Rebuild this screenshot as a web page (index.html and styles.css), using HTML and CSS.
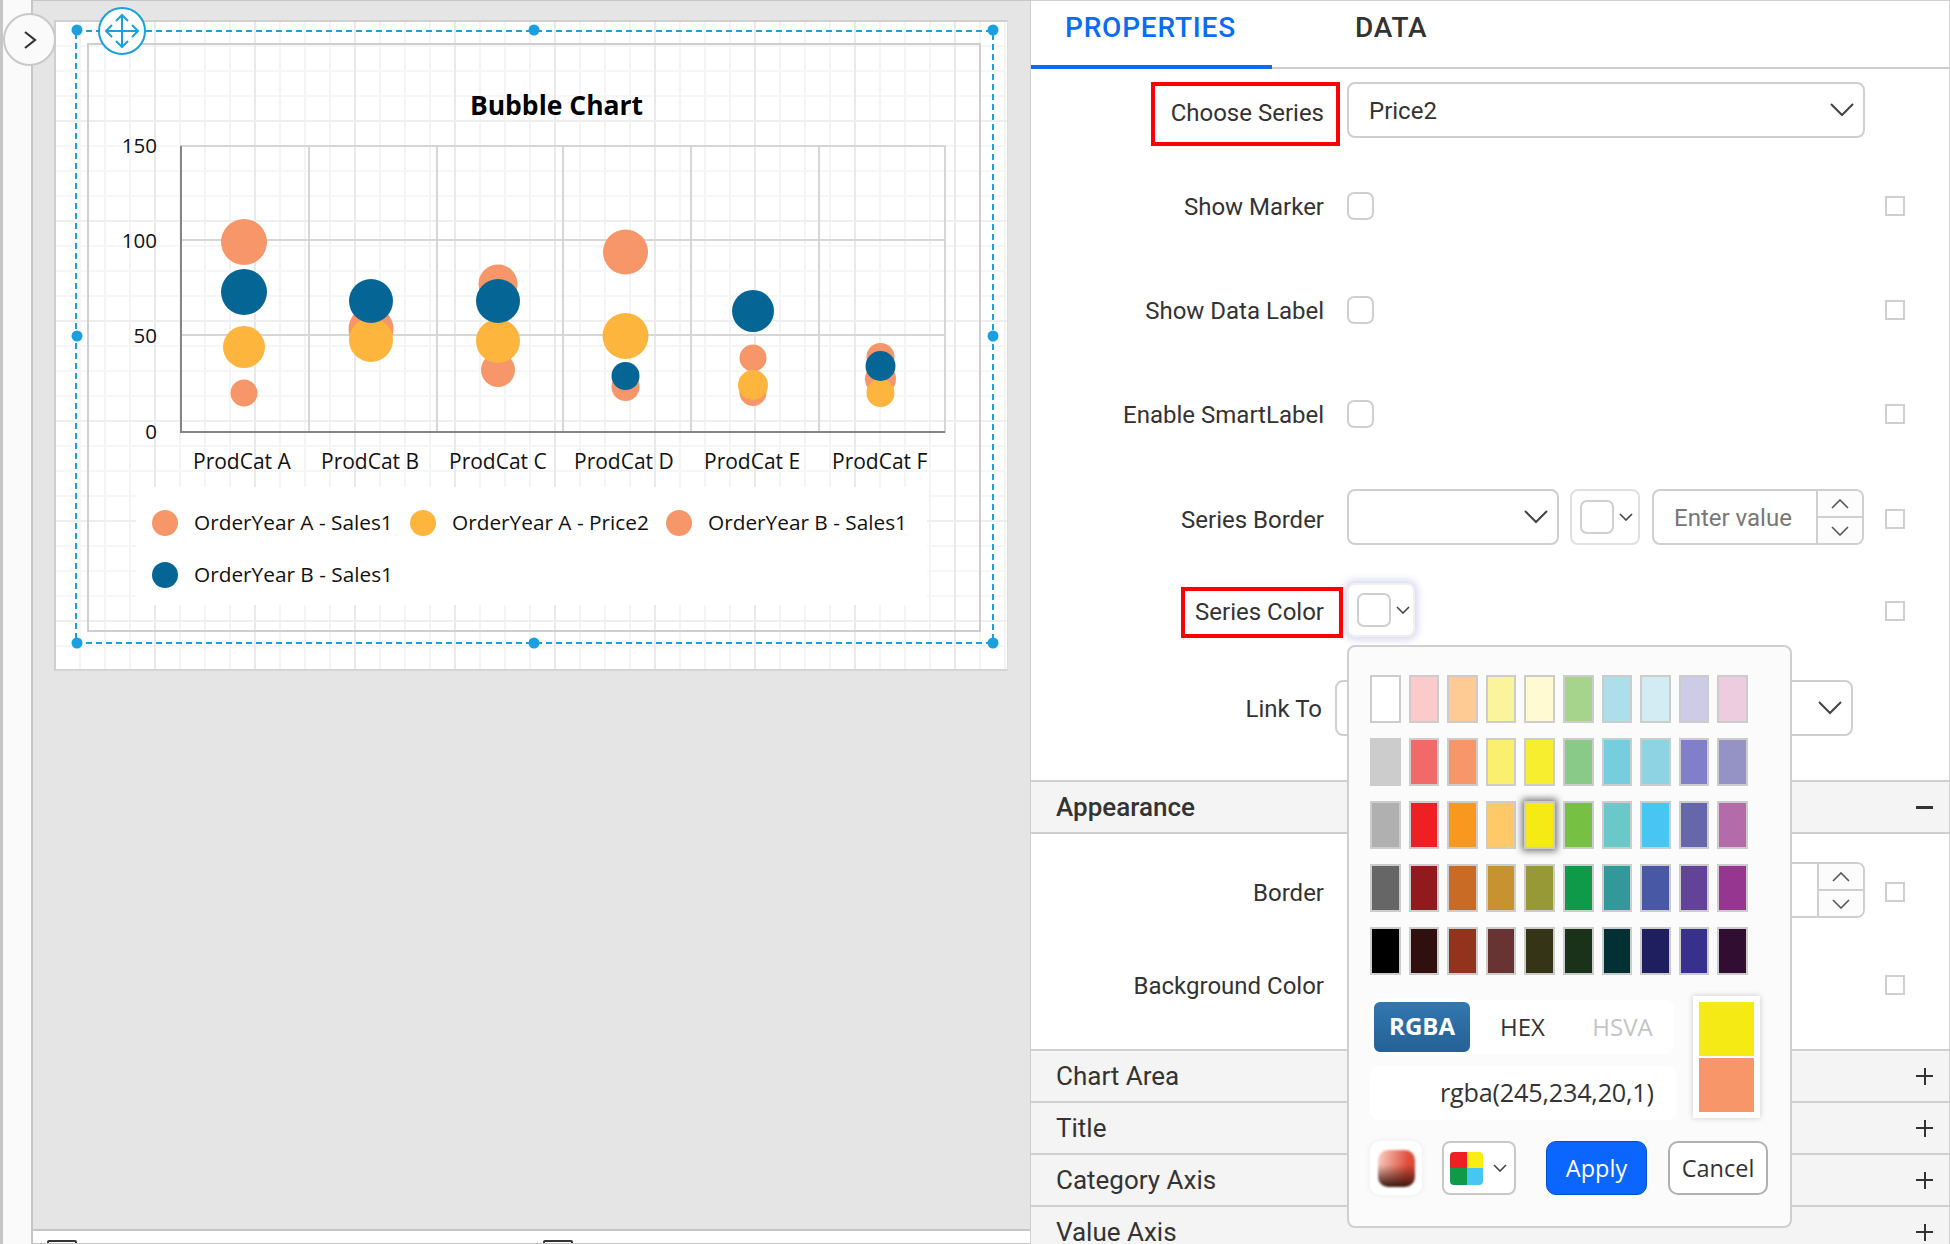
FILE: index.html
```html
<!DOCTYPE html>
<html lang="en">
<head>
<meta charset="utf-8">
<title>Bubble Chart properties</title>
<link rel="stylesheet" href="styles.css">
</head>
<body>
<div class="app">
  <div class="rail"></div>
  <button class="toggle" aria-label="Expand">
    <svg width="16" height="20" viewBox="0 0 16 20"><path d="M3 2l10 8-10 8" fill="none" stroke="#333" stroke-width="2.2"/></svg>
  </button>
  <main class="workspace">
    <div class="stage">
      <div class="surface">
        <svg class="chart" viewBox="0 0 954 651" width="954" height="651">
          <rect class="frame" x="34" y="24" width="892" height="587"/>
          <text class="title" x="502.5" y="95" text-anchor="middle">Bubble Chart</text>
          <g class="grid">
            <path d="M127 126H891V412H127ZM255 126V412M383 126V412M509 126V412M637 126V412M765 126V412M127 220H891M127 315H891"/>
          </g>
          <path class="axis" d="M127 126V412H891"/>
          <g class="ticks y-ticks" text-anchor="end">
            <text x="103" y="133">150</text>
            <text x="103" y="228">100</text>
            <text x="103" y="323">50</text>
            <text x="103" y="419">0</text>
          </g>
          <g class="c-o">
            <circle cx="190" cy="222" r="23"/><circle cx="190" cy="373" r="13.5"/>
            <circle cx="317" cy="309" r="22.5"/>
            <circle cx="444" cy="264" r="19.5"/><circle cx="444" cy="350" r="17"/>
            <circle cx="571.5" cy="232" r="22.5"/><circle cx="571.5" cy="367" r="14"/>
            <circle cx="699" cy="338" r="13.5"/><circle cx="699" cy="372.5" r="13.5"/>
            <circle cx="826.5" cy="337" r="14"/><circle cx="826.5" cy="359" r="15.5"/>
          </g>
          <g class="c-y">
            <circle cx="190" cy="327" r="21"/>
            <circle cx="317" cy="320" r="22"/>
            <circle cx="444" cy="321" r="22"/>
            <circle cx="571.5" cy="316" r="23"/>
            <circle cx="699" cy="365" r="15"/>
            <circle cx="826.5" cy="373" r="14"/>
          </g>
          <g class="c-b">
            <circle cx="190" cy="272" r="23"/>
            <circle cx="317" cy="281" r="22"/>
            <circle cx="444" cy="281" r="22"/>
            <circle cx="571.5" cy="356" r="14"/>
            <circle cx="699" cy="291" r="21"/>
            <circle cx="826.5" cy="346" r="15"/>
          </g>
          <g class="ticks">
            <text x="139" y="449">ProdCat A</text>
            <text x="267" y="449">ProdCat B</text>
            <text x="395" y="449">ProdCat C</text>
            <text x="520" y="449">ProdCat D</text>
            <text x="650" y="449">ProdCat E</text>
            <text x="778" y="449">ProdCat F</text>
          </g>
          <rect class="legend-bg" x="82" y="467" width="791" height="118"/>
          <circle class="c-o" cx="111" cy="503" r="13"/>
          <circle class="c-y" cx="369" cy="503" r="13"/>
          <circle class="c-o" cx="625" cy="503" r="13"/>
          <circle class="c-b" cx="111" cy="555" r="13"/>
          <g class="ticks legend">
            <text x="140" y="510">OrderYear A - Sales1</text>
            <text x="398" y="510">OrderYear A - Price2</text>
            <text x="654" y="510">OrderYear B - Sales1</text>
            <text x="140" y="562">OrderYear B - Sales1</text>
          </g>
          <rect class="select" x="22" y="11" width="917" height="612"/>
          <g class="handles">
            <circle cx="23" cy="10" r="5.5"/><circle cx="480" cy="10" r="5.5"/><circle cx="939" cy="10" r="5.5"/>
            <circle cx="23" cy="316" r="5.5"/><circle cx="939" cy="316" r="5.5"/>
            <circle cx="23" cy="623" r="5.5"/><circle cx="480" cy="623" r="5.5"/><circle cx="939" cy="623" r="5.5"/>
          </g>
          <g class="mover">
            <circle cx="68" cy="11" r="23"/>
            <path d="M68-5V27M52 11H84M62 1l6-6 6 6M62 21l6 6 6-6M58 5l-6 6 6 6M78 5l6 6-6 6"/>
          </g>
        </svg>
      </div>
    </div>
    <footer class="statusbar">
      <span class="status-icon"></span>
      <span class="status-icon status-icon-b"></span>
    </footer>
  </main>

  <aside class="panel">
    <nav class="tabs">
      <span class="tab tab-on">PROPERTIES</span>
      <span class="tab">DATA</span>
    </nav>

    <section class="form">
      <div class="row row-first row-low">
        <span class="label">Choose Series</span>
        <div class="field field-wide"><span>Price2</span><svg class="chev" viewBox="0 0 24 14"><path d="M1 1l11 11L23 1"/></svg></div>
        <span class="mark-box mark-a"></span>
      </div>
      <div class="row row-b">
        <span class="label">Show Marker</span>
        <span class="check"></span>
        <span class="tick-box"></span>
      </div>
      <div class="row row-c">
        <span class="label">Show Data Label</span>
        <span class="check"></span>
        <span class="tick-box"></span>
      </div>
      <div class="row row-c">
        <span class="label">Enable SmartLabel</span>
        <span class="check"></span>
        <span class="tick-box"></span>
      </div>
      <div class="row row-c2 row-low">
        <span class="label">Series Border</span>
        <div class="field field-style"><svg class="chev" viewBox="0 0 24 14"><path d="M1 1l11 11L23 1"/></svg></div>
        <div class="picker"><span class="swatch"></span><svg class="chev-s" viewBox="0 0 14 8"><path d="M1 1l6 6 6-6"/></svg></div>
        <div class="number">
          <span class="placeholder">Enter value</span>
          <span class="spin">
            <span class="spin-btn"><svg class="chev-m" viewBox="0 0 18 10"><path d="M1 9l8-8 8 8"/></svg></span>
            <span class="spin-btn"><svg class="chev-m" viewBox="0 0 18 10"><path d="M1 1l8 8 8-8"/></svg></span>
          </span>
        </div>
        <span class="tick-box"></span>
      </div>
      <div class="row row-d">
        <span class="label">Series Color</span>
        <div class="picker picker-focus"><span class="swatch"></span><svg class="chev-s" viewBox="0 0 14 8"><path d="M1 1l6 6 6-6"/></svg></div>
        <span class="mark-box mark-b"></span>
        <span class="tick-box"></span>
      </div>
      <div class="row row-e">
        <span class="label label-link">Link To</span>
        <div class="field field-link"><svg class="chev" viewBox="0 0 24 14"><path d="M1 1l11 11L23 1"/></svg></div>
      </div>
    </section>

    <header class="acc acc-open">
      <span class="acc-title">Appearance</span>
      <span class="acc-minus"></span>
    </header>
    <section class="form form-b">
      <div class="row row-f row-low">
        <span class="label">Border</span>
        <div class="number number-full">
          <span class="spin">
            <span class="spin-btn"><svg class="chev-m" viewBox="0 0 18 10"><path d="M1 9l8-8 8 8"/></svg></span>
            <span class="spin-btn"><svg class="chev-m" viewBox="0 0 18 10"><path d="M1 1l8 8 8-8"/></svg></span>
          </span>
        </div>
        <span class="tick-box"></span>
      </div>
      <div class="row row-g">
        <span class="label">Background Color</span>
        <span class="tick-box"></span>
      </div>
    </section>
    <div class="acc"><span>Chart Area</span><span class="acc-plus"></span></div>
    <div class="acc"><span>Title</span><span class="acc-plus"></span></div>
    <div class="acc"><span>Category Axis</span><span class="acc-plus"></span></div>
    <div class="acc"><span>Value Axis</span><span class="acc-plus"></span></div>

    <div class="popup">
      <div class="palette">
        <span class="tile t-fff"></span><span class="tile" style="background:#fbcbcb"></span><span class="tile" style="background:#fecb94"></span><span class="tile" style="background:#fbf49c"></span><span class="tile" style="background:#fffad2"></span><span class="tile" style="background:#a7d48c"></span><span class="tile" style="background:#addfea"></span><span class="tile" style="background:#d3ecf2"></span><span class="tile" style="background:#cdcbe5"></span><span class="tile" style="background:#eeccdf"></span>
        <span class="tile" style="background:#cccccc"></span><span class="tile" style="background:#f26969"></span><span class="tile" style="background:#f79668"></span><span class="tile" style="background:#faef6e"></span><span class="tile" style="background:#f8ee30"></span><span class="tile" style="background:#8aca88"></span><span class="tile" style="background:#76cddd"></span><span class="tile" style="background:#8ed3e1"></span><span class="tile" style="background:#827fca"></span><span class="tile" style="background:#9592c6"></span>
        <span class="tile" style="background:#b0b0b0"></span><span class="tile" style="background:#ee2024"></span><span class="tile" style="background:#f9981e"></span><span class="tile" style="background:#fec966"></span><span class="tile tile-on" style="background:#f5ea14"></span><span class="tile" style="background:#76c043"></span><span class="tile" style="background:#6bc8c9"></span><span class="tile" style="background:#45c6f3"></span><span class="tile" style="background:#6667ab"></span><span class="tile" style="background:#b36ca9"></span>
        <span class="tile" style="background:#666666"></span><span class="tile" style="background:#92191c"></span><span class="tile" style="background:#c96a25"></span><span class="tile" style="background:#c79331"></span><span class="tile" style="background:#979937"></span><span class="tile" style="background:#0e9a48"></span><span class="tile" style="background:#329899"></span><span class="tile" style="background:#4858a4"></span><span class="tile" style="background:#634398"></span><span class="tile" style="background:#963690"></span>
        <span class="tile" style="background:#000000"></span><span class="tile" style="background:#2f100e"></span><span class="tile" style="background:#92331e"></span><span class="tile" style="background:#673333"></span><span class="tile" style="background:#363417"></span><span class="tile" style="background:#1a321a"></span><span class="tile" style="background:#033133"></span><span class="tile" style="background:#1f1f5f"></span><span class="tile" style="background:#392f8d"></span><span class="tile" style="background:#310d31"></span>
      </div>
      <div class="modes">
        <div class="modes-left">
          <div class="mode-tabs">
            <span class="mode mode-on">RGBA</span>
            <span class="mode">HEX</span>
            <span class="mode mode-off">HSVA</span>
          </div>
          <div class="value">rgba(245,234,20,1)</div>
        </div>
        <div class="preview"><span class="pv-new"></span><span class="pv-old"></span></div>
      </div>
      <div class="actions">
        <span class="gradient-btn"><span class="gradient"></span></span>
        <span class="palette-btn">
          <span class="quad"><i class="q1"></i><i class="q2"></i><i class="q3"></i><i class="q4"></i></span>
          <svg class="chev-s" viewBox="0 0 14 8"><path d="M1 1l6 6 6-6"/></svg>
        </span>
        <span class="btn btn-apply">Apply</span>
        <span class="btn btn-cancel">Cancel</span>
      </div>
    </div>
  </aside>
</div>
</body>
</html>
```
FILE: styles.css
```css
* { box-sizing: border-box; }
html, body { margin: 0; padding: 0; background: #fff; }
.app { position: relative; display: flex; width: 1950px; height: 1244px; overflow: hidden; font-family: Roboto, sans-serif; color: #333; }

/* left rail */
.rail { width: 33px; flex: none; background: #fafafa; border-left: 3px solid #c6c6c6; border-right: 2px solid #c6c6c6; }
.toggle { position: absolute; left: 3px; top: 13px; width: 53px; height: 53px; padding: 0 0 0 1px; border: 2px solid #c8c8c8; border-radius: 50%; background: #fafafa; z-index: 3; display: flex; align-items: center; justify-content: center; }

/* workspace */
.workspace { width: 997px; flex: none; display: flex; flex-direction: column; }
.stage { flex: 1; background: #e5e5e5; border-top: 1px solid #c6c6c6; padding: 19px 0 0 21px; }
.surface { width: 954px; height: 651px; background-color: #fff; border-left: 2px solid #cfcfcf; border-top: 2px solid #cfcfcf; border-right: 1px solid #ddd; border-bottom: 2px solid #d4d4d4;
  background-image:
    linear-gradient(#eeeeee 2px, transparent 2px),
    linear-gradient(90deg, #e9e9e9 2px, transparent 2px),
    linear-gradient(#f6f6f6 2px, transparent 2px),
    linear-gradient(90deg, #f4f4f4 2px, transparent 2px);
  background-size: 100px 100px, 100px 100px, 25px 25px, 25px 25px;
  background-position: -2px -2px;
}
.chart { display: block; margin: -2px 0 0 -2px; overflow: visible; font-family: "Open Sans", sans-serif; }
.frame { fill: none; stroke: #cfcfcf; stroke-width: 2; }
.title { font-size: 26.5px; font-weight: 700; fill: #000; }
.grid path { fill: none; stroke: #d6d6d6; stroke-width: 2; }
.axis { fill: none; stroke: #858585; stroke-width: 2; }
.ticks text { font-size: 21px; fill: #111; }
.y-ticks text { font-size: 20.5px; }
.legend text { font-size: 20.8px; }
.c-o, .c-o circle { fill: #f79668; }
.c-y, .c-y circle { fill: #fdb53d; }
.c-b, .c-b circle { fill: #056696; }
.legend-bg { fill: #fff; }
.select { fill: none; stroke: #1a9fdf; stroke-width: 2; stroke-dasharray: 6 4; }
.handles circle { fill: #1a9fdf; }
.mover circle { fill: #fff; stroke: #1a9fdf; stroke-width: 2; }
.mover path { fill: none; stroke: #1a9fdf; stroke-width: 2; }

.statusbar { height: 15px; flex: none; background: #fff; border-top: 2px solid #c6c6c6; border-bottom: 1px solid #c6c6c6; display: flex; padding: 9px 0 0 14px; overflow: hidden; }
.status-icon { width: 30px; height: 12px; flex: none; border: 2px solid #333; border-radius: 2px; }
.status-icon-b { margin-left: 466px; }

/* panel */
.panel { position: relative; width: 920px; flex: none; background: #fff; border-left: 1px solid #cfcfcf; border-right: 1px solid #cfcfcf; border-top: 1px solid #cfcfcf; }
.tabs { display: flex; height: 68px; border-bottom: 2px solid #cfcfcf; }
.tab { font-size: 28px; font-weight: 500; line-height: 54px; letter-spacing: .8px; margin-left: 84px; }
.tab + .tab { margin-left: 83px; }
.tab-on { color: #0a6cf5; width: 241px; margin: 0 0 -2px; padding-left: 34px; border-bottom: 4px solid #0a6cf5; height: 68px; }

.form { display: block; }
.row { position: relative; display: flex; align-items: center; height: 56px; }
.row-first { margin-top: 13px; }
.row-b { margin-top: 40px; }
.row-c { margin-top: 48px; }
.row-c2 { margin-top: 47px; }
.row-d { margin-top: 37px; }
.row-e { margin-top: 42px; }
.row-f { margin-top: 28px; }
.row-g { margin-top: 39px; }
.label { width: 293px; flex: none; text-align: right; font-size: 24px; margin-right: 23px; margin-top: 2px; }
.label-link { width: 291px; }
.row-low .label { margin-top: 6px; }
.row-d .label { margin-top: 4px; }
.field { position: relative; height: 56px; border: 2px solid #cfcfcf; border-radius: 8px; font-size: 24px; display: flex; align-items: center; justify-content: space-between; padding: 0 9px 0 20px; }
.field span, .placeholder { margin-top: 2px; }
.field-wide { width: 518px; }
.field-style { width: 212px; justify-content: flex-end; }
.field-link { width: 518px; margin-left: -10px; justify-content: flex-end; }
.chev { width: 24px; height: 14px; fill: none; stroke: #444; stroke-width: 2; }
.chev-s { width: 14px; height: 8px; fill: none; stroke: #444; stroke-width: 1.6; flex: none; }
.chev-m { width: 18px; height: 10px; fill: none; stroke: #555; stroke-width: 1.6; }
.check { width: 27px; height: 28px; border: 2px solid #cfcfcf; border-radius: 7px; }
.tick-box { position: absolute; left: 854px; top: 18px; width: 20px; height: 20px; border: 2px solid #cfcfcf; }
.row-low .tick-box { top: 20px; }
.row-d .tick-box { top: 19px; }
.picker { width: 70px; height: 56px; margin-left: 11px; border: 2px solid #e0e0e0; border-radius: 8px; display: flex; align-items: center; gap: 5px; padding-left: 8px; background: #fff; }
.picker-focus { margin-left: 0; width: 68px; height: 54px; box-shadow: 0 0 7px 3px rgba(130,125,210,.3); border-color: #f0f0f0; }
.swatch { width: 34px; height: 34px; border: 2px solid #cfcfcf; border-radius: 7px; flex: none; }
.number { display: flex; align-items: center; justify-content: space-between; width: 212px; height: 56px; margin-left: 12px; border: 2px solid #cfcfcf; border-radius: 8px; padding-left: 20px; font-size: 24px; }
.number-full { width: 518px; margin-left: 0; padding: 0; justify-content: flex-end; }
.placeholder { color: #777; }
.spin { display: flex; flex-direction: column; width: 46px; height: 52px; border-left: 2px solid #cfcfcf; flex: none; background: #fcfcfc; border-radius: 0 6px 6px 0; }
.spin-btn { flex: 1; display: flex; align-items: center; justify-content: center; }
.spin-btn + .spin-btn { border-top: 2px solid #cfcfcf; }

.mark-box { position: absolute; border: 4px solid #f00; pointer-events: none; }
.mark-a { left: 120px; top: 0; width: 189px; height: 64px; }
.mark-b { left: 150px; top: 5px; width: 162px; height: 51px; }

/* accordion */
.acc { display: flex; align-items: center; justify-content: space-between; height: 52px; padding: 0 16px 0 25px; background: #f4f4f4; border-top: 2px solid #cfcfcf; font-size: 26px; }
.acc-open { margin-top: 44px; border-bottom: 2px solid #cfcfcf; height: 54px; }
.acc-title { font-weight: 500; }
.acc-minus { width: 17px; height: 3px; background: #333; }
.acc-plus { position: relative; width: 17px; height: 17px; background: linear-gradient(#333,#333) center/17px 2px no-repeat, linear-gradient(#333,#333) center/2px 17px no-repeat; }
.form-b { height: 215px; overflow: hidden; }

/* popup */
.popup { position: absolute; left: 316px; top: 644px; width: 445px; height: 583px; background: #fbfbfb; border: 2px solid #cfcfcf; border-radius: 8px; padding: 28px 21px 0; font-family: "Open Sans", sans-serif; z-index: 2; }
.palette { display: grid; grid-template-columns: repeat(10, 30.6px); grid-auto-rows: 48px; column-gap: 8px; row-gap: 15px; }
.tile { border: 2px solid #cccccc; }
.t-fff { background: #fff; }
.tile-on { box-shadow: 0 0 7px 2px rgba(0,0,0,.55); }
.modes { display: flex; margin-top: 21px; gap: 16px; align-items: flex-start; }
.modes-left { width: 307px; }
.mode-tabs { display: flex; align-items: center; width: 304px; height: 54px; margin-top: 4px; background: #fff; border-radius: 9px; font-size: 24px; line-height: 52px; }
.mode { width: 97px; text-align: center; }
.mode-on { width: 104px; height: 58px; margin: -2px 0; border: 4px solid #fff; border-radius: 10px; background: linear-gradient(#3277ae, #256196); color: #fff; font-weight: 700; line-height: 48px; }
.mode-off { color: #c4c4c4; width: 103px; }
.value { height: 54px; margin-top: 12px; background: #fff; border-radius: 9px; font-size: 25.2px; line-height: 52px; padding-left: 70px; letter-spacing: -.2px; }
.preview { width: 67px; height: 122px; flex: none; background: #fff; padding: 6px; box-shadow: 0 0 6px rgba(0,0,0,.2); display: flex; flex-direction: column; gap: 2px; }
.pv-new { flex: 1; background: #f5ea14; }
.pv-old { flex: 1; background: #f79668; }
.actions { display: flex; align-items: center; margin-top: 21px; font-size: 23.5px; }
.gradient-btn { width: 52px; height: 54px; background: #fff; border-radius: 10px; box-shadow: 0 0 6px rgba(0,0,0,.07); display: flex; align-items: center; justify-content: center; }
.gradient { width: 37px; height: 37px; border-radius: 10px; filter: blur(1px); background: linear-gradient(180deg, transparent 0%, transparent 40%, rgba(50,20,10,.95) 100%), linear-gradient(100deg, #f8d2c8 0%, #e04a38 75%); }
.palette-btn { display: flex; align-items: center; gap: 10px; width: 74px; height: 54px; margin-left: 20px; padding-left: 6px; background: #fff; border: 2px solid #c8c8c8; border-radius: 8px; }
.quad { display: grid; grid-template-columns: 1fr 1fr; width: 33px; height: 33px; flex: none; border-radius: 4px; overflow: hidden; filter: blur(.4px); }
.q1 { background: #ee2024; } .q2 { background: #f8ee14; } .q3 { background: #0e9a48; } .q4 { background: #45c6f3; }
.btn { display: flex; align-items: center; justify-content: center; height: 54px; border-radius: 10px; }
.btn-apply { width: 101px; margin-left: 30px; background: #0a66ff; border: 1px solid #0052cc; color: #fff; }
.btn-cancel { width: 100px; margin-left: 21px; background: #fff; border: 2px solid #b0b0b0; color: #333; }
```
